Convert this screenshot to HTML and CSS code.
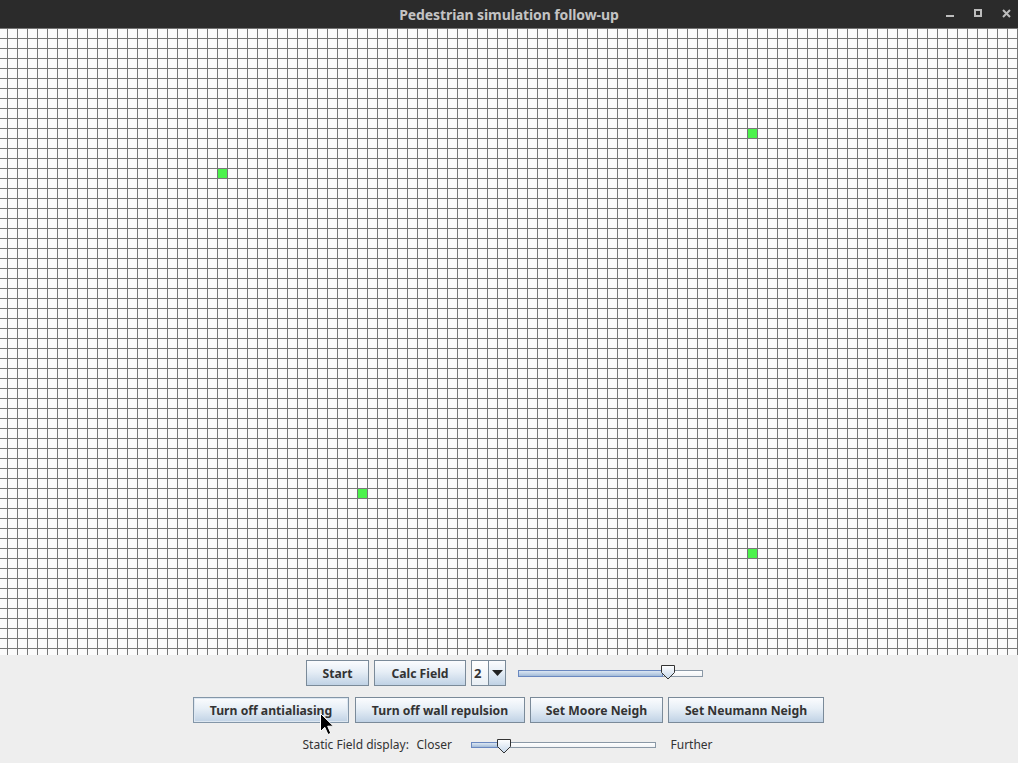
FILE: index.html
```html
<!DOCTYPE html>
<html>
<head>
<meta charset="utf-8">
<link rel="stylesheet" href="styles.css">
</head>
<body>
<div class="window">
  <div class="titlebar">
    <span class="title">Pedestrian simulation follow-up</span>
    <div class="controls">
      <span class="ctl min"></span>
      <span class="ctl max"></span>
      <span class="ctl close">
        <svg width="9" height="9" viewBox="0 0 9 9"><path d="M1 1 L8 8 M8 1 L1 8" stroke="#bdbdbd" stroke-width="2"/></svg>
      </span>
    </div>
  </div>
  <div class="grid">
    <div class="ped" style="left:218px;top:141px"></div>
    <div class="ped" style="left:748px;top:101px"></div>
    <div class="ped" style="left:358px;top:461px"></div>
    <div class="ped" style="left:748px;top:521px"></div>
  </div>
  <div class="panel">
    <div class="row row1">
      <button class="btn w-start">Start</button>
      <button class="btn w-calc">Calc Field</button>
      <div class="combo">
        <span class="combo-val">2</span>
        <span class="combo-arrow"><svg width="11" height="6" viewBox="0 0 11 6"><path d="M0 0 H11 L5.5 6 Z" fill="#222"/></svg></span>
      </div>
      <div class="slider s1">
        <div class="track"><div class="fill" style="width:145px"></div></div>
        <svg class="thumb" style="left:149px" width="16" height="16" viewBox="0 0 16 16">
          <defs><linearGradient id="tg1" x1="0" y1="0" x2="0" y2="1"><stop offset="0" stop-color="#ffffff"/><stop offset="1" stop-color="#c4d6ea"/></linearGradient></defs>
          <path d="M1.5 1.5 H14.5 V8.5 L8 15 L1.5 8.5 Z" fill="url(#tg1)" stroke="#333" stroke-width="1"/>
        </svg>
      </div>
    </div>
    <div class="row row2">
      <button class="btn w-aa focus">Turn off antialiasing</button>
      <button class="btn w-wall">Turn off wall repulsion</button>
      <button class="btn w-moore">Set Moore Neigh</button>
      <button class="btn w-neu">Set Neumann Neigh</button>
    </div>
    <div class="row row3">
      <span class="lbl l-static">Static Field display:</span>
      <span class="lbl l-closer">Closer</span>
      <div class="slider s2">
        <div class="track"><div class="fill" style="width:28px"></div></div>
        <svg class="thumb" style="left:32px" width="16" height="16" viewBox="0 0 16 16">
          <defs><linearGradient id="tg2" x1="0" y1="0" x2="0" y2="1"><stop offset="0" stop-color="#ffffff"/><stop offset="1" stop-color="#c4d6ea"/></linearGradient></defs>
          <path d="M1.5 1.5 H14.5 V8.5 L8 15 L1.5 8.5 Z" fill="url(#tg2)" stroke="#333" stroke-width="1"/>
        </svg>
      </div>
      <span class="lbl l-further">Further</span>
    </div>
  </div>
  <svg class="cursor" width="15" height="24" viewBox="0 0 15 24">
    <path d="M0.5 0.5 V18.5 L4.8 14.3 L8 21.5 L10.8 20.3 L7.7 13.2 L13.5 13.2 Z" fill="#000" stroke="#fff" stroke-width="1"/>
  </svg>
</div>
</body>
</html>
```

FILE: styles.css
```css
html, body {
  margin: 0;
  padding: 0;
}
body {
  width: 1018px;
  height: 763px;
  overflow: hidden;
  background: #eeeeee;
  font-family: "Noto Sans", "Open Sans", sans-serif;
}
.window {
  position: relative;
  width: 1018px;
  height: 763px;
  display: flex;
  flex-direction: column;
}
.titlebar {
  height: 28px;
  flex: none;
  background: #2b2b2b;
  display: flex;
  align-items: center;
  justify-content: center;
  position: relative;
}
.title {
  color: #c4c4c4;
  font-weight: 700;
  font-size: 14px;
  letter-spacing: -0.1px;
}
.controls {
  position: absolute;
  right: 0;
  top: 0;
  height: 28px;
}
.ctl {
  position: absolute;
  display: block;
}
.ctl.min {
  left: -72px;
  top: 15px;
  width: 8px;
  height: 2px;
  background: #bdbdbd;
}
.ctl.max {
  left: -44px;
  top: 9px;
  width: 4px;
  height: 4px;
  border: 2px solid #bdbdbd;
}
.ctl.close {
  left: -16px;
  top: 9px;
  width: 9px;
  height: 9px;
}
.ctl.close svg {
  display: block;
}
.grid {
  position: relative;
  height: 627px;
  flex: none;
  background-color: #fbfbfb;
  background-image:
    linear-gradient(to right, #777777 1px, transparent 1px),
    linear-gradient(to bottom, #777777 1px, transparent 1px);
  background-size: 10px 10px;
  background-position: 7px 0, 0 0;
}
.ped {
  position: absolute;
  width: 9px;
  height: 9px;
  background: #4cf24c;
}
.panel {
  flex: 1;
  background: #eeeeee;
  display: flex;
  flex-direction: column;
}
.row {
  display: flex;
  justify-content: center;
  align-items: flex-start;
}
.row1 {
  margin-top: 5px;
  height: 27px;
  gap: 5px;
  padding-right: 1px;
}
.row2 {
  margin-top: 10px;
  gap: 5px;
  padding-right: 1px;
}
.row3 {
  margin-top: 12px;
  height: 20px;
  align-items: center;
  padding-right: 4px;
}
.btn {
  box-sizing: border-box;
  height: 26px;
  padding: 0;
  margin: 0;
  border: 1px solid #7a8a99;
  border-radius: 0;
  background: linear-gradient(to bottom, #fbfcfe 0%, #e6eef6 45%, #c0d2e5 100%);
  font-family: "Noto Sans", "Open Sans", sans-serif;
  font-weight: 700;
  font-size: 12.2px;
  color: #333333;
  text-align: center;
}
.btn.focus {
  border-color: #8396a8;
  box-shadow: inset 0 0 0 1px #dde7f1;
  margin-right: 1px;
}
.w-start { width: 63px; }
.w-calc { width: 92px; }
.w-aa { width: 156px; }
.w-wall { width: 170px; }
.w-moore { width: 133px; }
.w-neu { width: 156px; }
.combo {
  box-sizing: border-box;
  width: 35px;
  height: 26px;
  border: 1px solid #7a8a99;
  display: flex;
  background: #ffffff;
}
.combo-val {
  width: 14px;
  font-weight: 700;
  font-size: 13px;
  color: #333;
  line-height: 24px;
  padding-left: 2px;
  background: linear-gradient(to bottom, #ffffff, #e9eff5);
}
.combo-arrow {
  flex: 1;
  border-left: 1px solid #7a8a99;
  background: linear-gradient(to bottom, #fbfcfe 0%, #e6eef6 45%, #c0d2e5 100%);
  display: flex;
  align-items: center;
  justify-content: center;
}
.combo-arrow svg {
  display: block;
}
.slider {
  position: relative;
  width: 200px;
  height: 27px;
}
.slider .track {
  position: absolute;
  left: 7px;
  width: 185px;
  box-sizing: border-box;
  height: 7px;
  border: 1px solid #8a98a6;
  background: linear-gradient(to bottom, #ffffff, #f1f3f5);
}
.slider .fill {
  position: absolute;
  left: -1px;
  top: -1px;
  height: 7px;
  box-sizing: border-box;
  border: 1px solid #6a88c0;
  background: linear-gradient(to bottom, #dbe6f2 0%, #c3d4e8 45%, #a2bad7 100%);
}
.s1 .track { top: 10px; }
.s1 .thumb { top: 4px; }
.s2 {
  height: 20px;
}
.s2 .track { top: 7px; height: 6px; }
.s2 .fill { height: 6px; }
.s2 .thumb { top: 3px; }
.thumb {
  position: absolute;
  display: block;
}
.lbl {
  font-size: 12px;
  color: #333333;
  white-space: nowrap;
  line-height: 20px;
}
.l-static { width: 114px; }
.l-closer { width: 47px; }
.l-further { width: 41px; margin-left: 7px; }
.cursor {
  position: absolute;
  left: 320px;
  top: 713px;
}
```
